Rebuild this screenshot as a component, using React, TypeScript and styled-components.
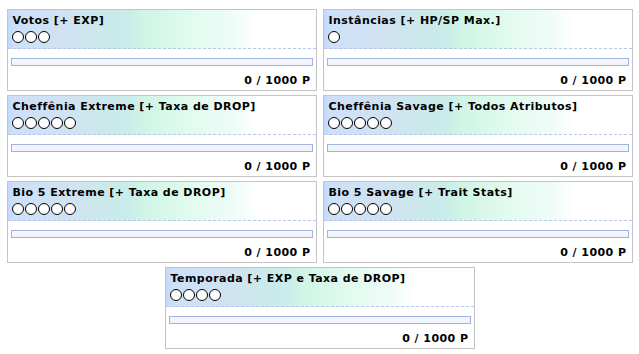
import * as React from 'react'
import styled, { createGlobalStyle } from 'styled-components'

const GlobalStyle = createGlobalStyle`
  html, body {
    margin: 0;
    padding: 0;
    background: #fff;
  }
`

const Board = styled.div`
  display: flex;
  flex-wrap: wrap;
  justify-content: center;
  gap: 4px 6px;

  width: 627px;
  margin: 9px 0 0 6px;

  font-family: 'DejaVu Sans', Verdana, sans-serif;
  font-size: 11px;
  font-weight: bold;
  letter-spacing: 0.45px;
  color: #000;
`

const Card = styled.div`
  box-sizing: border-box;
  width: 310px;
  border: 1px solid #c4c4c4;
  background: #fff;
`

const Header = styled.div`
  padding: 4px 4px 5px 4px;
  border-bottom: 1px dashed #b8c8ec;
  background: linear-gradient(
    to right,
    #c4d8fc 0px,
    #cde0f8 6px,
    #d0e2f2 60px,
    #cce8ec 90px,
    #c9ecea 120px,
    #cff4e6 135px,
    #d8f8ea 160px,
    #e4fbf0 190px,
    #eefcf8 225px,
    #ffffff 250px
  );
`

const Title = styled.div`
  line-height: 14px;
  padding-left: 1px;
  white-space: nowrap;
`

const Dots = styled.div`
  display: flex;
  gap: 1px;
  margin-top: 3px;
`

const Dot = styled.span`
  box-sizing: border-box;
  width: 12px;
  height: 12px;
  border: 1px solid #000;
  border-radius: 50%;
  background: #fff;
`

const Body = styled.div`
  padding: 9px 3px 2px 3px;
`

const Bar = styled.div`
  box-sizing: border-box;
  height: 8px;
  border: 1px solid #9fb2e2;
  background: linear-gradient(to bottom, #f6f8fd, #eef2fb);
`

const Fill = styled.div`
  height: 100%;
  background: #7f9be0;
`

const Points = styled.div`
  margin-top: 8px;
  padding-right: 2px;
  line-height: 14px;
  text-align: right;
`

type Goal = { title: string; dots: number; value: number; max: number }

const goals: Goal[] = [
  { title: 'Votos [+ EXP]', dots: 3, value: 0, max: 1000 },
  { title: 'Instâncias [+ HP/SP Max.]', dots: 1, value: 0, max: 1000 },
  { title: 'Cheffênia Extreme [+ Taxa de DROP]', dots: 5, value: 0, max: 1000 },
  { title: 'Cheffênia Savage [+ Todos Atributos]', dots: 5, value: 0, max: 1000 },
  { title: 'Bio 5 Extreme [+ Taxa de DROP]', dots: 5, value: 0, max: 1000 },
  { title: 'Bio 5 Savage [+ Trait Stats]', dots: 5, value: 0, max: 1000 },
  { title: 'Temporada [+ EXP e Taxa de DROP]', dots: 4, value: 0, max: 1000 },
]

function GoalCard({ goal }: { goal: Goal }) {
  return (
    <Card>
      <Header>
        <Title>{goal.title}</Title>
        <Dots>
          {Array.from({ length: goal.dots }).map((_, i) => <Dot key={i} />)}
        </Dots>
      </Header>
      <Body>
        <Bar>
          <Fill style={{ width: `${(goal.value / goal.max) * 100}%` }} />
        </Bar>
        <Points>{goal.value} / {goal.max} P</Points>
      </Body>
    </Card>
  )
}

export default function App() {
  return (
    <>
      <GlobalStyle />
      <Board>
        {goals.map(g => <GoalCard key={g.title} goal={g} />)}
      </Board>
    </>
  )
}
